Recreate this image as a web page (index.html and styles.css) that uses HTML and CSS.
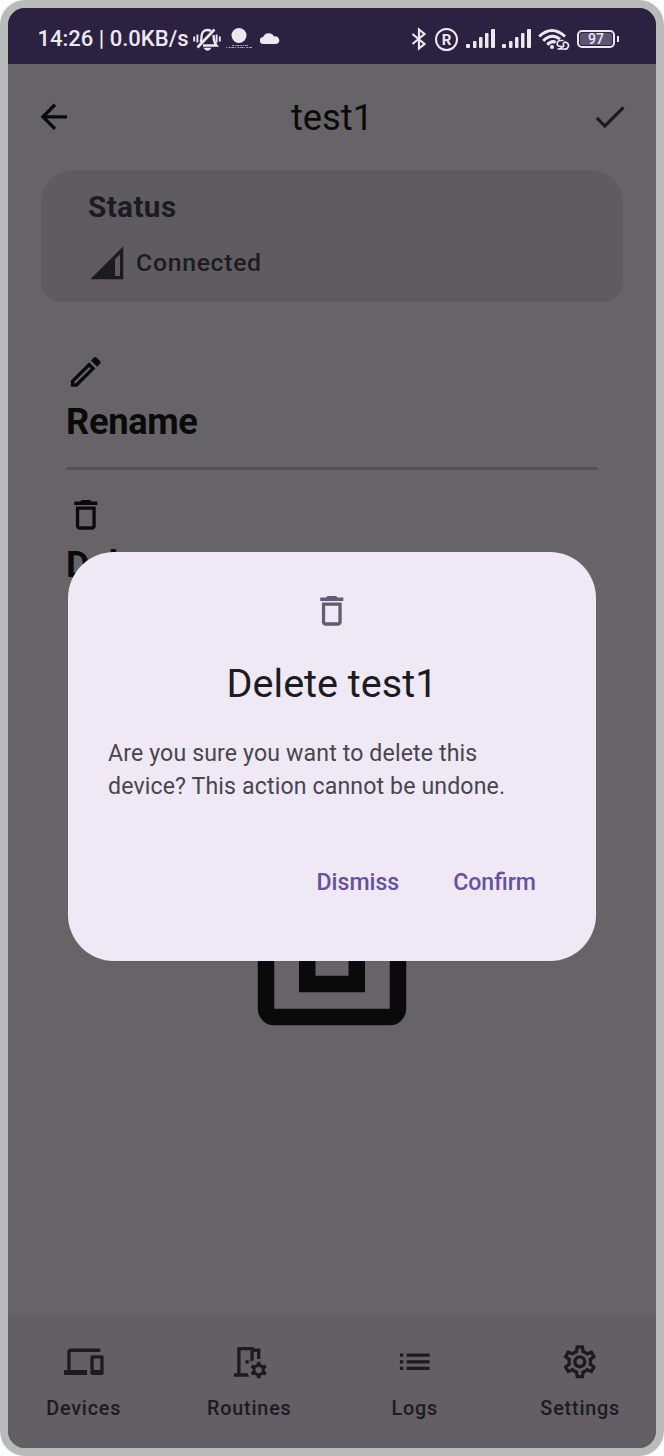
FILE: index.html
```html
<!DOCTYPE html>
<html lang="en">
<head>
<meta charset="utf-8">
<title>test1</title>
<link rel="stylesheet" href="styles.css">
</head>
<body>
<div class="phone">
  <header class="statusbar">
    <span class="clock">14:26 | 0.0KB/s</span>
    <svg class="mute" width="28" height="24" viewBox="0 0 28 24" fill="none" stroke="#ece8f0" stroke-width="2.400"><path d="M7.500 15c1.200-2 1-3.500 1-5.500 0-4 2.500-6.500 6-6.500 1.500 0 2.500.3 3.500 1M20.500 8c.3 4 0 7 3 10.500H10"/><path d="M4.500 20.500 21.500 2.500" stroke-width="2.600"/><path d="M1.200 9.500v5M4.400 7.500v8M23.600 7.500v8M26.800 9.500v5" stroke-width="1.900"/><path d="M10.500 20.800h8q-1.500 3-4 3t-4-3z" fill="#ece8f0" stroke="none"/></svg>
    <span class="app-dot"><svg width="16" height="15" viewBox="0 0 16 15"><circle cx="8" cy="7.500" r="7.500" fill="#ece8f0"/></svg><svg width="26" height="6" viewBox="0 0 26 6" stroke="#ece8f0" stroke-width="1" opacity=".65"><path d="M6 2.500h16" stroke-dasharray="2 .7 1 .7 3 1"/><path d="M0 4.500h26" stroke-dasharray="1 1.500 2 .8 3 .6"/></svg></span>
    <svg class="cloud" width="20" height="13" viewBox="0 0 20 13" fill="#ece8f0"><path d="M3.500 12a3.500 3.500 0 0 1-.4-7A6 6 0 0 1 14 4.500 3.800 3.800 0 0 1 16.500 12z"/></svg>
    <span class="spacer"></span>
    <svg class="bt" width="16" height="24" viewBox="0 0 16 24" fill="none" stroke="#ece8f0" stroke-width="2.200"><path d="M1.500 7 13.500 17 8 21.500V2.500L13.500 7 1.500 17"/></svg>
    <span class="reg">R</span>
    <svg class="sig" width="29" height="19" viewBox="0 0 29 19" fill="#ece8f0"><rect y="15" width="4" height="4" rx="1"/><rect x="7" y="12" width="3.500" height="7" rx="1"/><rect x="13" y="8" width="3.500" height="11" rx="1"/><rect x="19" y="4" width="3.500" height="15" rx="1"/><rect x="25" y="0" width="4" height="19" rx="1"/></svg>
    <svg class="sig2" width="29" height="19" viewBox="0 0 29 19" fill="#ece8f0"><rect y="15" width="4" height="4" rx="1"/><rect x="7" y="12" width="3.500" height="7" rx="1"/><rect x="13" y="8" width="3.500" height="11" rx="1"/><rect x="19" y="4" width="3.500" height="15" rx="1"/><rect x="25" y="0" width="4" height="19" rx="1"/></svg>
    <svg class="wifi" width="32" height="22" viewBox="0 0 32 22" fill="none" stroke="#ece8f0" stroke-width="3"><path d="M1.200 8.500Q14-3.500 27 8.500M5.200 12.800Q14 4.500 22 11.200"/><path d="M9.200 16.800Q14 12 17.500 14.500"/><circle cx="14" cy="19" r="2" fill="#ece8f0" stroke="none"/><path d="M25.500 12.500h-3.500a3 3 0 0 0-1.500 5.500c2 .8 4-.5 3 2-.5 1-2 1-4 1M22.500 21h3.500a3.500 3.500 0 0 0 2.500-6.500c-2-1-3.500.5-3 2.500.5 1.500-.5 2-1.500 1.500" stroke-width="1.700"/></svg>
    <span class="battery"><span class="charge">97</span></span><span class="nub"></span>
  </header>

  <div class="appbar">
    <svg class="icon" viewBox="0 0 24 24"><path d="M20 11H7.830l5.590-5.590L12 4l-8 8 8 8 1.410-1.410L7.830 13H20z"/></svg>
    <h1>test1</h1>
    <svg class="icon check" viewBox="0 0 24 24"><path d="M9 16.170 4.830 12l-1.420 1.410L9 19 21 7l-1.410-1.410z"/></svg>
  </div>

  <section class="card">
    <h2>Status</h2>
    <div class="connection">
      <svg class="icon" viewBox="0 0 24 24"><path d="M2 22h20V2zm18-2h-3V9.830l3-3z"/></svg>
      <span>Connected</span>
    </div>
  </section>

  <main class="actions">
    <div class="action">
      <svg class="icon" viewBox="0 0 24 24"><path d="M14.060 9.020l.92.92L5.920 19H5v-.92l9.060-9.060M17.660 3c-.25 0-.51.1-.7.29l-1.830 1.830 3.750 3.750 1.830-1.830c.39-.39.39-1.020 0-1.410l-2.340-2.340c-.2-.2-.45-.29-.71-.29zm-3.600 3.190L3 17.250V21h3.750L17.810 9.940z"/></svg>
      <h3>Rename</h3>
    </div>
    <div class="divider"></div>
    <div class="action">
      <svg class="icon" viewBox="0 0 24 24"><path d="M6 19c0 1.100.9 2 2 2h8c1.100 0 2-.9 2-2V7H6zM8 9h8v10H8zm7.500-5-1-1h-5l-1 1H5v2h14V4z"/></svg>
      <h3>Delete</h3>
    </div>
  </main>
  <svg class="device" viewBox="0 0 24 24" fill="none" stroke="#0a0a0a" stroke-width="2"><rect x="4" y="4" width="16" height="16" rx="1"/><rect x="9" y="9" width="6" height="7"/></svg>

  <nav class="nav">
    <a class="tab"><svg class="icon" viewBox="0 0 24 24"><path d="M4 6h18V4H4c-1.100 0-2 .9-2 2v11H0v3h14v-3H4zm19 2h-6c-.55 0-1 .45-1 1v10c0 .55.45 1 1 1h6c.55 0 1-.45 1-1V9c0-.55-.45-1-1-1zm-1 9h-4v-7h4z"/></svg><span>Devices</span></a>
    <a class="tab"><svg class="icon" viewBox="0 0 24 24"><path d="M15 4V3H5v16H3v2h9.300q-.6-.9-.9-2H7V5h6v7.200q.9-.8 2-1.200V6h2v4.300h2V4zM10 11h2v2h-2z"/><path fill-rule="evenodd" d="m21.690 16.370 1.140-1-1-1.730-1.450.49c-.32-.27-.68-.48-1.080-.63L19 12h-2l-.3 1.490c-.4.15-.76.36-1.080.63l-1.450-.49-1 1.730 1.140 1c-.08.5-.08.76 0 1.260l-1.140 1 1 1.730 1.450-.49c.32.27.68.48 1.080.63L17 22h2l.3-1.490c.4-.15.76-.36 1.080-.63l1.450.49 1-1.730-1.140-1c.08-.51.08-.77 0-1.270zM18 19c-1.100 0-2-.9-2-2s.9-2 2-2 2 .9 2 2-.9 2-2 2z"/></svg><span>Routines</span></a>
    <a class="tab"><svg class="icon" viewBox="0 0 24 24"><path d="M3 7h2v2H3zM7 7h14v2H7zM3 11h2v2H3zM7 11h14v2H7zM3 15h2v2H3zM7 15h14v2H7z"/></svg><span>Logs</span></a>
    <a class="tab"><svg class="icon" viewBox="0 0 24 24"><path d="M19.43 12.98c.04-.32.07-.64.07-.98 0-.34-.03-.66-.07-.98l2.11-1.65c.19-.15.24-.42.12-.64l-2-3.46c-.09-.16-.26-.25-.44-.25-.06 0-.12.01-.17.03l-2.49 1c-.52-.4-1.08-.73-1.69-.98l-.38-2.65C14.46 2.18 14.25 2 14 2h-4c-.25 0-.46.18-.49.42l-.38 2.65c-.61.25-1.17.59-1.69.98l-2.49-1c-.06-.02-.12-.03-.18-.03-.17 0-.34.09-.43.25l-2 3.46c-.13.22-.07.49.12.64l2.11 1.65c-.04.32-.07.65-.07.98 0 .33.03.66.07.98l-2.11 1.65c-.19.15-.24.42-.12.64l2 3.46c.09.16.26.25.44.25.06 0 .12-.01.17-.03l2.49-1c.52.4 1.08.73 1.69.98l.38 2.65c.03.24.24.42.49.42h4c.25 0 .46-.18.49-.42l.38-2.65c.61-.25 1.17-.59 1.69-.98l2.49 1c.06.02.12.03.18.03.17 0 .34-.09.43-.25l2-3.46c.12-.22.07-.49-.12-.64l-2.11-1.65zm-1.98-1.71c.04.31.05.52.05.73 0 .21-.02.43-.05.73l-.14 1.13.89.7 1.08.84-.7 1.21-1.27-.51-1.04-.42-.9.68c-.43.32-.84.56-1.25.73l-1.06.43-.16 1.13-.2 1.35h-1.4l-.19-1.35-.16-1.13-1.06-.43c-.43-.18-.83-.41-1.23-.71l-.91-.7-1.06.43-1.27.51-.7-1.21 1.08-.84.89-.7-.14-1.13c-.03-.31-.05-.54-.05-.74s.02-.43.05-.73l.14-1.13-.89-.7-1.08-.84.7-1.21 1.27.51 1.04.42.9-.68c.43-.32.84-.56 1.25-.73l1.06-.43.16-1.13.2-1.35h1.39l.19 1.35.16 1.13 1.06.43c.43.18.83.41 1.23.71l.91.7 1.06-.43 1.27-.51.7 1.21-1.07.85-.89.7.14 1.13zM12 8c-2.21 0-4 1.79-4 4s1.79 4 4 4 4-1.79 4-4-1.79-4-4-4zm0 6c-1.1 0-2-.9-2-2s.9-2 2-2 2 .9 2 2-.9 2-2 2z"/></svg><span>Settings</span></a>
  </nav>

  <div class="dialog" role="dialog">
    <svg class="icon" viewBox="0 0 24 24"><path d="M6 19c0 1.100.9 2 2 2h8c1.100 0 2-.9 2-2V7H6zM8 9h8v10H8zm7.500-5-1-1h-5l-1 1H5v2h14V4z"/></svg>
    <h2>Delete test1</h2>
    <p>Are you sure you want to delete this<br>device? This action cannot be undone.</p>
    <div class="buttons"><button>Dismiss</button><button>Confirm</button></div>
  </div>
</div>
</body>
</html>
```

FILE: styles.css
```css
* { box-sizing: border-box; }
body { margin: 0; background: #fff; font-family: Roboto, "Liberation Sans", sans-serif; }
h1, h2, h3, p { margin: 0; }
svg { display: block; flex: none; }
.icon { width: 39.6px; height: 39.6px; fill: currentColor; }

.phone {
  position: relative;
  display: flex;
  flex-direction: column;
  width: 664px;
  height: 1456px;
  border: 8px solid #b8bbb9;
  border-radius: 25px;
  background: #676467;
  color: #0a0a0a;
  overflow: hidden;
}

.statusbar {
  display: flex;
  align-items: center;
  height: 56.4px;
  padding: 5px 37px 0 29.5px;
  background: #2b2141;
  color: #ece8f0;
}
.clock { width: 155px; padding-top: 1.5px; font-size: 22px; line-height: 30px; font-weight: 500; white-space: nowrap; }
.mute { margin-left: 0; }
.app-dot { display: flex; flex-direction: column; align-items: center; margin-left: 5px; }
.cloud { margin-left: 8px; }
.spacer { flex: 1; }
.reg {
  width: 23px; height: 23px; margin: 1px 0 0 8px;
  border: 2px solid; border-radius: 50%;
  font-size: 15px; line-height: 20px; font-weight: 700; text-align: center;
}
.sig { margin-left: 8px; }
.sig2 { margin-left: 7px; }
.wifi { margin-left: 7px; }
.battery {
  width: 38px; height: 18px; margin-left: 7px; padding: 1px;
  border: 2px solid; border-radius: 5px;
}
.charge {
  display: block; height: 12px; border-radius: 2px; background: #5c5470;
  font-size: 14px; line-height: 13px; font-weight: 500; text-align: center;
}
.nub { width: 2px; height: 6px; margin-left: 2px; background: #ece8f0; }

.appbar {
  display: flex;
  align-items: center;
  justify-content: space-between;
  height: 105.6px;
  padding: 0 26px;
}
.appbar h1 { padding-top: 1px; font-size: 36.3px; line-height: 44px; font-weight: 400; }
.check { color: #1c1b1f; }

.card {
  height: 132px;
  margin: 0 33px;
  padding: 18px 46px 0 47px;
  border-radius: 33px 33px 20px 20px;
  background: #5e5c60;
  color: #1c1b1f;
}
.card h2 { font-size: 29.7px; line-height: 37px; font-weight: 700; letter-spacing: .4px; }
.connection { display: flex; align-items: center; gap: 9.5px; margin: 18px 0 0 -1px; font-size: 24.75px; font-weight: 500; letter-spacing: .7px; }

.actions { padding: 50px 58px 0; }
.action .icon { margin-left: -.5px; }
.action h3 { margin-top: 8px; font-size: 36.3px; line-height: 44px; font-weight: 700; letter-spacing: -.35px; }
.divider { height: 3px; margin: 23.5px 0 25px; background: #535155; }
.divider + .action h3 { margin-top: 8.5px; }
.device { width: 198px; height: 198px; margin: 265px auto 0; }

.nav {
  display: flex;
  gap: 14px;
  height: 132px;
  margin-top: auto;
  padding-top: 26.4px;
  background: #625f65;
  color: #1c1b1f;
}
.tab { flex: 1 1 0; display: flex; flex-direction: column; align-items: center; gap: 15px; font-size: 19.8px; line-height: 24px; font-weight: 500; letter-spacing: .82px; }

.dialog {
  position: absolute;
  left: 60px;
  top: 543.5px;
  display: flex;
  flex-direction: column;
  align-items: center;
  width: 528px;
  height: 409.5px;
  padding: 39.5px 40px 0;
  border-radius: 46px;
  background: #eee9f4;
  color: #625b71;
}
.dialog h2 { margin-top: 29px; font-size: 39.6px; line-height: 48px; font-weight: 400; color: #1c1b1f; }
.dialog p { align-self: stretch; margin-top: 29px; font-size: 23.1px; line-height: 33px; letter-spacing: .14px; color: #49454f; white-space: nowrap; }
.buttons { display: flex; align-self: flex-end; gap: 54px; margin: 63px 20px 0 0; }
.buttons button { padding: 0; border: 0; background: none; font: 500 23.1px/33px Roboto, sans-serif; color: #6750a4; }
```
